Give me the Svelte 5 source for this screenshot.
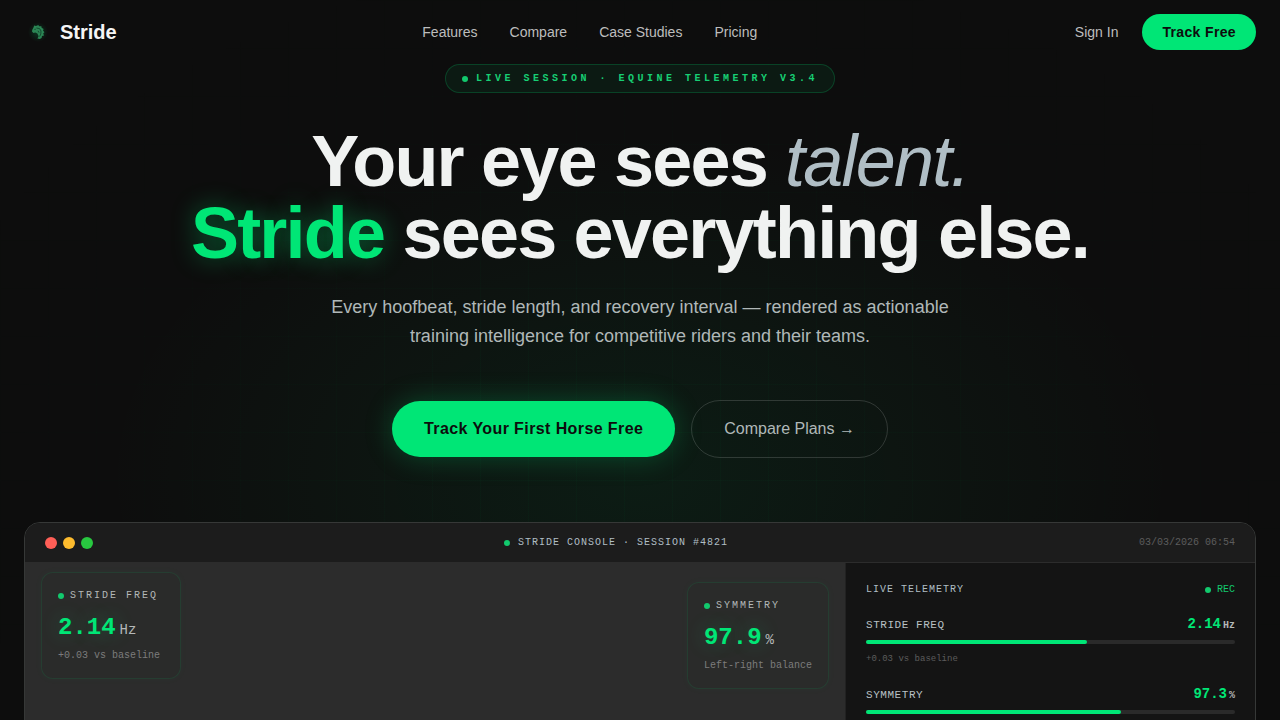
<script lang="ts">
  const links = ["Features", "Compare", "Case Studies", "Pricing"];

  const cards = [
    { label: "Stride Freq", value: "2.14", unit: "Hz", note: "+0.03 vs baseline", side: "left" },
    { label: "Symmetry", value: "97.9", unit: "%", note: "Left-right balance", side: "right" },
  ];

  const metrics = [
    { label: "Stride Freq", value: "2.14", unit: "Hz", note: "+0.03 vs baseline", fill: 60 },
    { label: "Symmetry", value: "97.3", unit: "%", note: "Left-right balance", fill: 69 },
  ];
</script>

<div class="page">
  <header>
    <a class="logo" href="/">
      <svg viewBox="0 0 28 28" width="28" height="28" aria-hidden="true">
        <defs>
          <radialGradient id="halo">
            <stop offset="0" stop-color="#00e676" stop-opacity="0.2" />
            <stop offset="1" stop-color="#00e676" stop-opacity="0" />
          </radialGradient>
        </defs>
        <circle cx="14" cy="14" r="10" fill="url(#halo)" />
        <path
          d="M9.6 9.2 L10.2 7.4 L12 8 L14.4 7 L15 8.2 L17.4 8.2 L17.6 9.8 L19.6 11 L19 12.4 L20.4 14.2 L19.2 15.4 L20 17.6 L18 18 L17.6 20 L15.8 21 L13.4 20.6 L14.6 18.2 L13.4 15.6 L11.4 14.6 L9.4 15 L8 13.6 L8.2 12 Z"
          fill="#2b8554"
        />
        <path
          d="M12.4 10 L15.6 10.6 L17 13 L16.8 16 L15.6 18.6 M10.4 11.4 L11.8 11.2 M14 12.8 L15 14.6"
          stroke="#144a2f"
          fill="none"
        />
      </svg>
      <span>Stride</span>
    </a>
    <nav>
      {#each links as link}
        <a href="#{link.toLowerCase().replace(' ', '-')}">{link}</a>
      {/each}
    </nav>
    <div class="account">
      <a class="signin" href="/login">Sign In</a>
      <button class="track">Track Free</button>
    </div>
  </header>

  <main>
    <section class="hero">
      <div class="badge"><i class="dot"></i>Live Session · Equine Telemetry v3.4</div>
      <h1>
        Your eye sees <em>talent.</em><br />
        <strong>Stride</strong> sees everything else.
      </h1>
      <p>
        Every hoofbeat, stride length, and recovery interval — rendered as actionable training
        intelligence for competitive riders and their teams.
      </p>
      <div class="actions">
        <button class="primary">Track Your First Horse Free</button>
        <button class="secondary">Compare Plans →</button>
      </div>
    </section>

    <section class="console">
      <div class="titlebar">
        <div class="lights">
          <i class="red"></i>
          <i class="yellow"></i>
          <i class="green"></i>
        </div>
        <div class="title"><i class="dot"></i>STRIDE CONSOLE · SESSION #4821</div>
        <time>03/03/2026 06:54</time>
      </div>
      <div class="body">
        <div class="video">
          {#each cards as card}
            <div class="card {card.side}">
              <div class="card-label"><i class="dot"></i>{card.label}</div>
              <div class="card-value">{card.value}<span>{card.unit}</span></div>
              <div class="card-note">{card.note}</div>
            </div>
          {/each}
        </div>
        <aside>
          <div class="aside-head">
            <h2>Live Telemetry</h2>
            <span class="rec"><i class="dot"></i>REC</span>
          </div>
          {#each metrics as metric}
            <div class="metric">
              <div class="metric-head">
                <span class="metric-label">{metric.label}</span>
                <span class="metric-value">{metric.value}<span>{metric.unit}</span></span>
              </div>
              <div class="bar"><div class="fill" style="width: {metric.fill}%"></div></div>
              <div class="metric-note">{metric.note}</div>
            </div>
          {/each}
        </aside>
      </div>
    </section>
  </main>
</div>

<style>
  :global(body) {
    margin: 0;
    background: #0d0d0d;
  }

  .page {
    --green: #00e676;
    --silver: #b0bec5;
    --mono: "Liberation Mono", monospace;
    position: relative;
    height: 100vh;
    overflow: hidden;
    color: #f0f2f1;
    font-family: "Liberation Sans", Arial, sans-serif;
    background: radial-gradient(ellipse 42% 48% at 50% 66%, rgba(0, 230, 118, 0.07), transparent);
  }

  .page::before {
    content: "";
    position: absolute;
    inset: 0;
    background-image:
      linear-gradient(rgba(0, 230, 118, 0.025) 1px, transparent 1px),
      linear-gradient(90deg, rgba(0, 230, 118, 0.025) 1px, transparent 1px);
    background-size: 48px 48px;
    mask-image: radial-gradient(ellipse 60% 70% at 50% 60%, black 20%, transparent);
    pointer-events: none;
  }

  a {
    color: inherit;
    text-decoration: none;
  }

  button {
    font-family: inherit;
    cursor: pointer;
  }

  header {
    position: relative;
    display: flex;
    justify-content: space-between;
    align-items: center;
    height: 64px;
    padding: 0 24px;
    color: #bdbdbd;
    font-size: 14px;
  }

  .logo {
    display: flex;
    align-items: center;
    gap: 8px;
    color: #f5f5f5;
    font-size: 20px;
    font-weight: bold;
  }

  nav {
    display: flex;
    gap: 32px;
  }

  .account {
    display: flex;
    align-items: center;
    gap: 12px;
  }

  .signin {
    padding: 0 12px;
  }

  .track {
    height: 36px;
    padding: 0 20px;
    border: 0;
    border-radius: 18px;
    background: var(--green);
    color: #0d0d0d;
    font-size: 14px;
    font-weight: bold;
    letter-spacing: 0.025em;
  }

  main {
    position: relative;
    padding: 0 24px;
  }

  .hero {
    display: flex;
    flex-direction: column;
    align-items: center;
    text-align: center;
  }

  .dot {
    flex: none;
    width: 6px;
    height: 6px;
    border-radius: 50%;
    background: #12c96d;
  }

  .badge {
    display: flex;
    align-items: center;
    gap: 8px;
    padding: 0 16px;
    border: 1px solid rgba(0, 230, 118, 0.2);
    border-radius: 16px;
    background: rgba(0, 230, 118, 0.06);
    color: #17cf74;
    font-family: var(--mono);
    font-size: 10px;
    font-weight: bold;
    line-height: 27px;
    letter-spacing: 0.35em;
    text-transform: uppercase;
  }

  h1 {
    margin: 32px 0 24px;
    font-size: 72px;
    line-height: 72px;
    letter-spacing: -0.025em;
  }

  h1 em {
    color: var(--silver);
    font-weight: normal;
  }

  h1 strong {
    color: var(--green);
    text-shadow: 0 0 24px rgba(0, 230, 118, 0.4);
  }

  p {
    max-width: 640px;
    margin: 0 0 49px;
    color: #b0b8b8;
    font-size: 18px;
    line-height: 29px;
  }

  .actions {
    display: flex;
    align-items: center;
    gap: 16px;
    margin-bottom: 64px;
  }

  .primary {
    height: 56px;
    padding: 0 32px;
    border: 0;
    border-radius: 28px;
    background: var(--green);
    color: #0d0d0d;
    font-size: 16px;
    font-weight: bold;
    letter-spacing: 0.025em;
    box-shadow: 0 0 28px rgba(0, 230, 118, 0.25);
  }

  .secondary {
    height: 58px;
    padding: 0 32px;
    border: 1px solid rgba(255, 255, 255, 0.15);
    border-radius: 29px;
    background: transparent;
    color: #b0b8b8;
    font-size: 16px;
  }

  .console {
    overflow: hidden;
    border: 1px solid #363837;
    border-radius: 16px;
    background: #141414;
    font-family: var(--mono);
    font-size: 10px;
  }

  .titlebar {
    display: flex;
    justify-content: space-between;
    align-items: center;
    height: 39px;
    padding: 0 20px;
    border-bottom: 1px solid #2c2c2c;
    background: #1c1c1c;
  }

  .lights {
    display: flex;
    gap: 6px;
  }

  .lights i {
    width: 12px;
    height: 12px;
    border-radius: 50%;
  }

  .red {
    background: #ff5f57;
  }

  .yellow {
    background: #febc2e;
  }

  .green {
    background: #28c840;
  }

  .title {
    display: flex;
    align-items: center;
    gap: 8px;
    color: var(--silver);
    letter-spacing: 1px;
  }

  time {
    color: #5c5c5c;
  }

  .body {
    display: grid;
    grid-template-columns: 2fr 1fr;
    min-height: 480px;
  }

  .video {
    position: relative;
    background: #2c2c2c;
  }

  /* readouts float over the video */
  .card {
    position: absolute;
    box-sizing: border-box;
    min-width: 140px;
    padding: 16px;
    border: 1px solid rgba(0, 230, 118, 0.1);
    border-radius: 12px;
    background: #2a2b2a;
    box-shadow: 0 0 8px rgba(0, 230, 118, 0.03);
  }

  .left {
    top: 9px;
    left: 16px;
  }

  .right {
    top: 19px;
    right: 16px;
  }

  .card-label {
    display: flex;
    align-items: center;
    gap: 6px;
    margin-bottom: 12px;
    color: #b4b8b8;
    line-height: 13px;
    letter-spacing: 2px;
    text-transform: uppercase;
  }

  .card-value {
    margin-bottom: 6px;
    color: var(--green);
    font-size: 24px;
    font-weight: bold;
    line-height: 28px;
    text-shadow: 0 0 20px rgba(0, 230, 118, 0.3);
  }

  .card-value span {
    margin-left: 4px;
    color: #b4b8b8;
    font-size: 14px;
    font-weight: normal;
    text-shadow: none;
  }

  .card-note {
    color: #7c7c7c;
    line-height: 12px;
  }

  aside {
    display: flex;
    flex-direction: column;
    gap: 20px;
    padding: 20px;
    border-left: 1px solid #222222;
    background: #141414;
  }

  .aside-head {
    display: flex;
    justify-content: space-between;
    align-items: center;
    line-height: 13px;
  }

  h2 {
    margin: 0;
    color: var(--silver);
    font-size: 10px;
    font-weight: normal;
    letter-spacing: 1px;
    text-transform: uppercase;
  }

  .rec {
    display: flex;
    align-items: center;
    gap: 6px;
    color: #12c96d;
  }

  .metric-head {
    display: flex;
    justify-content: space-between;
    align-items: baseline;
    margin-bottom: 6px;
    line-height: 16px;
  }

  .metric-label {
    color: #b8c0c4;
    font-size: 11px;
    letter-spacing: 0.05em;
    text-transform: uppercase;
  }

  .metric-value {
    color: var(--green);
    font-size: 14px;
    font-weight: bold;
  }

  .metric-value span {
    margin-left: 2px;
    color: #b4b8b8;
    font-size: 10px;
  }

  .bar {
    height: 4px;
    margin-bottom: 8px;
    border-radius: 2px;
    background: #2a2a2a;
  }

  .fill {
    height: 4px;
    border-radius: 2px;
    background: var(--green);
  }

  .metric-note {
    color: #5c5c5c;
    font-size: 9px;
    line-height: 14px;
  }
</style>
